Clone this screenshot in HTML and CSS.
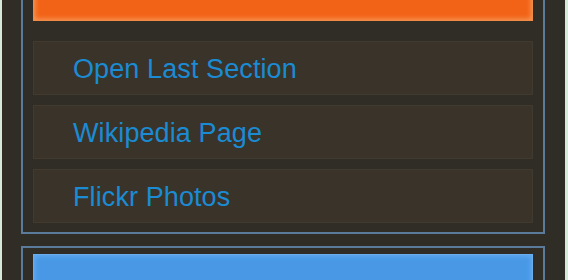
FILE: index.html
```html
<!DOCTYPE html>
<html>
<head>
<meta charset="utf-8">
<link rel="stylesheet" href="styles.css">
</head>
<body>
<div class="page">
  <section class="panel panel-first">
    <div class="bar bar-orange"></div>
    <ul class="menu">
      <li class="menu-item">Open Last Section</li>
      <li class="menu-item">Wikipedia Page</li>
      <li class="menu-item">Flickr Photos</li>
    </ul>
  </section>
  <section class="panel panel-second">
    <div class="bar bar-blue"></div>
  </section>
</div>
</body>
</html>
```
FILE: styles.css
```css
html, body {
  margin: 0;
  padding: 0;
  height: 100%;
  overflow: hidden;
}
body {
  background: #d6ead9;
  font-family: "Liberation Sans", Arial, sans-serif;
}
.page {
  margin: -40px 3px 0 2px;
  padding: 0 20px 0 19px;
  background: #302c26;
  min-height: 400px;
}
.panel {
  border: 2px solid #5b7b9d;
}
.panel-first {
  padding: 10px 10px 9px;
}
.panel-second {
  margin-top: 12px;
  padding: 6px 10px 10px;
}
.bar {
  box-sizing: border-box;
}
.bar-orange {
  height: 49px;
  background: #f26317;
  border: 1px solid #f08a44;
  box-shadow: inset 0 0 5px 1px #f79a5a;
}
.bar-blue {
  height: 60px;
  background: #4898e6;
  border: 1px solid #6aaef0;
  box-shadow: inset 0 0 5px 1px #66acf0;
}
.menu {
  list-style: none;
  margin: 20px 0 0;
  padding: 0;
  display: flex;
  flex-direction: column;
  gap: 10px;
}
.menu-item {
  box-sizing: border-box;
  height: 54px;
  padding: 12px 0 0 39px;
  background: #3a3329;
  border: 1px solid #433a2f;
  color: #1b8bd3;
  font-size: 27px;
  line-height: 31px;
  letter-spacing: 0.1px;
}
```
